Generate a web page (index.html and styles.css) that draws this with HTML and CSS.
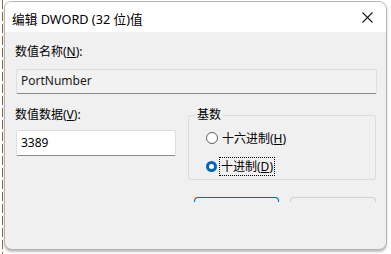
FILE: index.html
```html
<!DOCTYPE html>
<html>
<head>
<meta charset="utf-8">
<link rel="stylesheet" href="styles.css">
</head>
<body>
<div class="screen">
  <div class="desk"><div class="dash"></div></div>
  <div class="win">
    <div class="titlebar">
      <span class="title">编辑 DWORD (32 位)值</span>
      <svg class="close" width="11" height="11" viewBox="0 0 11 11"><path d="M0.5 0.5 L10.5 10.5 M10.5 0.5 L0.5 10.5" stroke="#1a1a1a" stroke-width="1.1" fill="none"/></svg>
    </div>
    <div class="content">
      <div class="label">数值名称(<u>N</u>):</div>
      <div class="field ro">PortNumber</div>
      <div class="row">
        <div class="leftcol">
          <div class="label">数值数据(<u>V</u>):</div>
          <div class="field wr">3389</div>
        </div>
        <fieldset class="group">
          <legend>基数</legend>
          <div class="opt"><span class="radio"></span><span class="otext">十六进制(<u>H</u>)</span></div>
          <div class="opt"><span class="radio on"></span><span class="otext focus">十进制(<u>D</u>)</span></div>
        </fieldset>
      </div>
      <div class="buttons">
        <div class="btn primary"></div>
        <div class="btn"></div>
      </div>
    </div>
  </div>
</div>
</body>
</html>
```
FILE: styles.css
```css
html, body {
  margin: 0;
  padding: 0;
  background: #ffffff;
}
body {
  width: 391px;
  height: 254px;
  overflow: hidden;
  font-family: "Noto Sans", "Noto Sans CJK SC", sans-serif;
  font-size: 12px;
  color: #000;
}
.screen {
  display: flex;
  height: 254px;
}
.desk {
  width: 4px;
  flex: none;
}
.dash {
  margin-left: 2px;
  width: 1px;
  height: 254px;
  background: repeating-linear-gradient(to bottom, #8a6a3a 0 9px, transparent 9px 12px);
}
.win {
  margin-top: 1px;
  width: 381px;
  height: 247px;
  border: 1px solid #b4b4b4;
  border-radius: 7px 8px 8px 8px;
  background: #f0f0f0;
  overflow: hidden;
  box-shadow: 0 2px 2px rgba(0,0,0,0.25);
  display: flex;
  flex-direction: column;
}
.titlebar {
  height: 30px;
  background: #ffffff;
  display: flex;
  align-items: center;
  justify-content: space-between;
  padding: 0 13px 0 7px;
  flex: none;
}
.title {
  font-size: 12.7px;
  padding-top: 2px;
}
.close {
  display: block;
  margin-top: 1px;
}
.content {
  padding: 12px 10px 0 10px;
}
.label {
  height: 16px;
  line-height: 16px;
}
.field {
  margin-top: 9px;
  margin-left: 1px;
  height: 23px;
  line-height: 22px;
  padding-left: 4px;
  box-sizing: border-box;
  border: 1px solid #dedede;
  border-bottom-color: #8a8a8a;
  border-radius: 2px;
}
.ro {
  width: 361px;
  height: 25px;
  background: #f2f2f2;
  color: #1a1a1a;
}
.wr {
  margin-top: 7px;
  width: 160px;
  height: 26px;
  line-height: 24px;
  background: #ffffff;
}
.row {
  display: flex;
  margin-top: 13px;
}
.leftcol {
  width: 173px;
  flex: none;
}
.group {
  margin: 0;
  padding: 5px 0 0 17px;
  width: 189px;
  height: 73px;
  box-sizing: border-box;
  border: 1px solid #dcdcdc;
  border-radius: 2px;
}
.group legend {
  padding: 0 1px;
  margin-left: -10px;
  line-height: 16px;
  font-size: 12px;
}
.opt {
  display: flex;
  align-items: center;
  height: 20px;
  margin-bottom: 8px;
}
.radio {
  width: 10px;
  height: 10px;
  border: 1px solid #5f5f5f;
  border-radius: 50%;
  background: #fff;
  flex: none;
}
.radio.on {
  width: 5px;
  height: 5px;
  border: 3.5px solid #0067c0;
  background: #ffffff;
}
.otext {
  margin-left: 2px;
  line-height: 17px;
  padding: 0 1px;
  border: 1px solid transparent;
}
.focus {
  border: 1px dotted #000;
}
.buttons {
  display: flex;
  gap: 11px;
  margin-top: 17px;
  margin-left: 179px;
}
.btn {
  width: 84px;
  height: 4px;
  border: 1px solid #d0d0d0;
  border-bottom: none;
  border-radius: 4px 4px 0 0;
}
.btn.primary {
  width: 83px;
  border-color: #0067c0;
}
```
